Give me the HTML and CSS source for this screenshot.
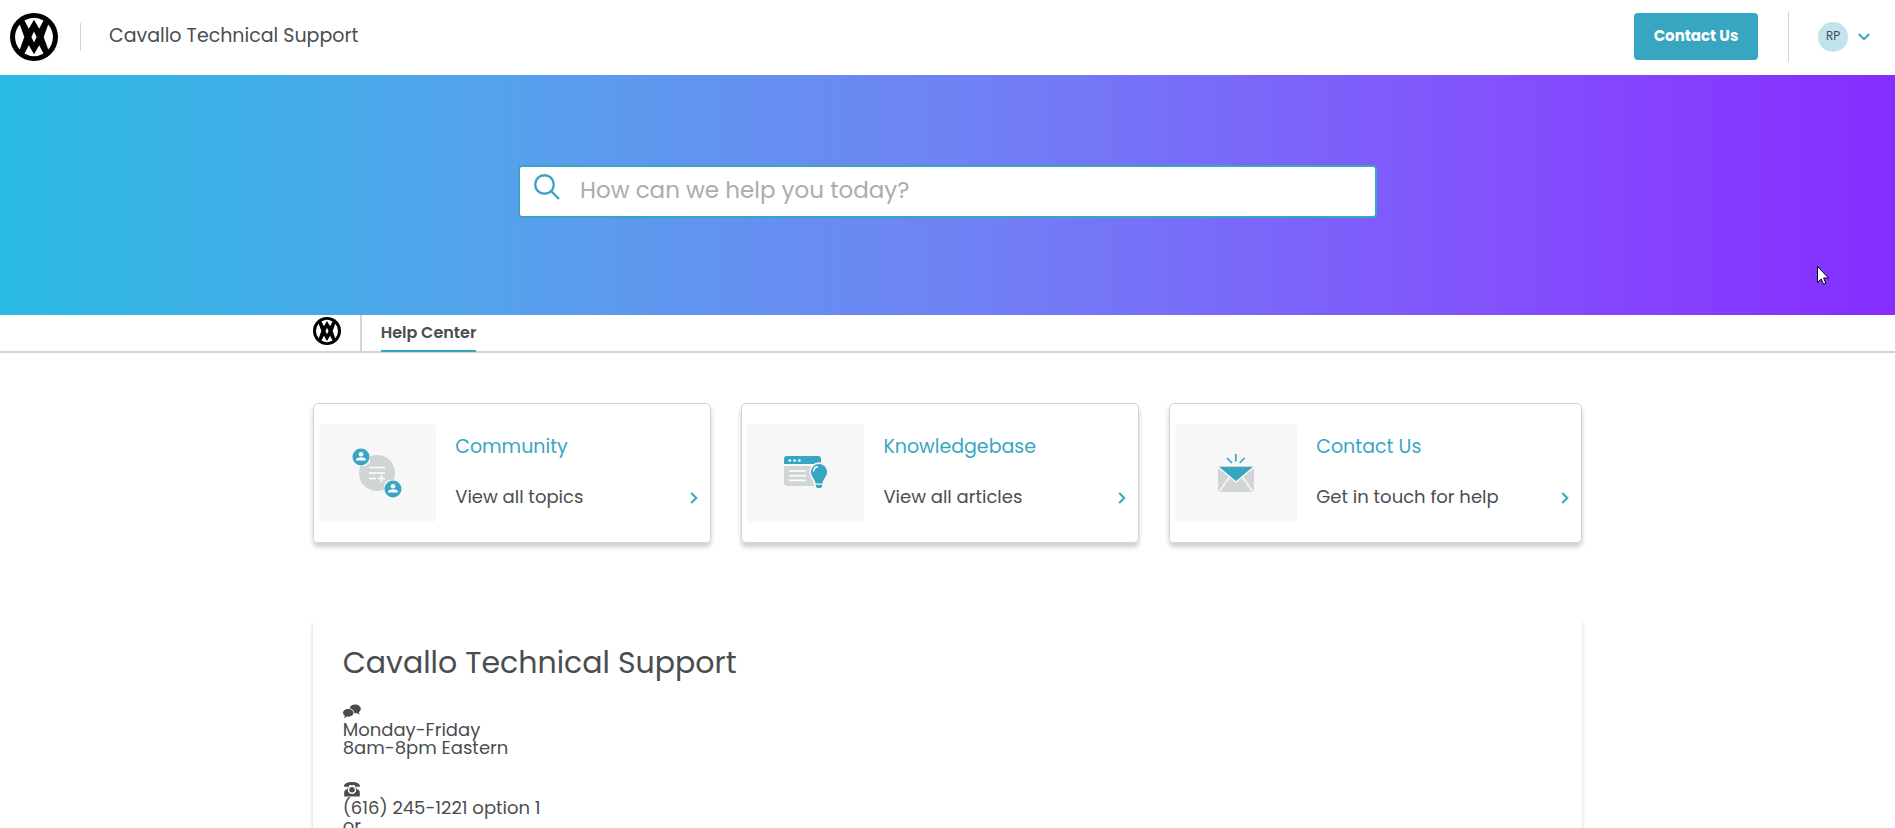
FILE: index.html
```html
<!DOCTYPE html>
<html lang="en">
<head>
<meta charset="utf-8">
<title>Cavallo Technical Support</title>
<link rel="stylesheet" href="styles.css">
</head>
<body>
<svg class="defs" aria-hidden="true">
  <symbol id="logo" viewBox="0 0 48 48">
    <circle cx="24" cy="24" r="24" fill="#000"/>
    <g fill="#fff">
      <path d="M14.500 7.600A18.900 18.900 0 0 1 33.500 7.600L29.200 15.800 24 6.800 18.800 15.800z"/>
      <path d="M14.500 40.400A18.900 18.900 0 0 0 33.500 40.400L29.200 32.200 24 41.200 18.800 32.200z"/>
      <path d="M9.800 11.500A18.900 18.900 0 0 0 9.800 36.500L14.300 24z"/>
      <path d="M38.200 11.500A18.900 18.900 0 0 1 38.200 36.500L33.700 24z"/>
      <path d="M24 18.500 26.600 24 24 29.500 21.400 24z"/>
    </g>
  </symbol>
  <symbol id="chevron" viewBox="0 0 8 12">
    <path d="M1.200 1 6.300 6 1.200 11" fill="none" stroke="#38a6c1" stroke-width="2"/>
  </symbol>
  <symbol id="person" viewBox="0 0 18 18">
    <circle cx="9" cy="9" r="9.200" fill="#38a6c1" stroke="#f7f7f7" stroke-width="1.400"/>
    <circle cx="9" cy="6.200" r="2.300" fill="#fff"/>
    <path d="M4 12.600V12c0-1.800 2.500-2.700 5-2.700s5 .9 5 2.700v.6z" fill="#fff"/>
  </symbol>
</svg>

<header class="topbar">
  <a class="brand" href="#" aria-label="Home"><svg class="brand-logo"><use href="#logo"/></svg></a>
  <a class="site-name" href="#">Cavallo Technical Support</a>
  <button class="contact-button" type="button">Contact Us</button>
  <button class="account" type="button" aria-label="Account menu">
    <span class="avatar">RP</span>
    <svg class="account-arrow" viewBox="0 0 12 8"><path d="M.8 1 6 6.200 11.200 1" fill="none" stroke="#38a6c1" stroke-width="2"/></svg>
  </button>
</header>

<section class="hero">
  <form class="search" role="search">
    <svg class="search-icon" viewBox="0 0 26 26"><g fill="none" stroke="#38a6c1" stroke-width="2.400"><circle cx="10.500" cy="10.500" r="9.300"/><path d="m17 17 8 8"/></g></svg>
    <input class="search-input" type="text" aria-label="Search" placeholder="How can we help you today?">
  </form>
  <svg class="pointer" viewBox="0 0 12 19"><path d="M.5.500v16l3.700-3.500 2.300 5.300 2.400-1-2.300-5.300h5z" fill="#fff" stroke="#000"/></svg>
</section>

<nav class="subnav">
  <div class="container subnav-row">
    <a class="subnav-home" href="#" aria-label="Home"><svg class="subnav-logo"><use href="#logo"/></svg></a>
    <a class="subnav-link" href="#">Help Center</a>
  </div>
</nav>

<main class="container">
  <div class="cards">
    <a class="card" href="#">
      <span class="thumb">
        <svg class="icon-community" viewBox="0 0 50 50">
          <circle cx="25" cy="25" r="18" fill="#d1d5d6"/>
          <path d="M17 19.500h16M17 25h16M17 30.500h7M26 30.500h7M29.500 27v7" stroke="#fff" stroke-width="1.600"/>
          <use href="#person" x="0" y="0" width="18" height="18"/>
          <use href="#person" x="32" y="32" width="18" height="18"/>
        </svg>
      </span>
      <span class="card-text"><span class="card-title">Community</span><span class="card-sub">View all topics</span></span>
      <svg class="card-arrow"><use href="#chevron"/></svg>
    </a>
    <a class="card" href="#">
      <span class="thumb">
        <svg class="icon-kb" viewBox="0 0 44 34">
          <path d="M0 8V3a3 3 0 0 1 3-3h31a3 3 0 0 1 3 3v5z" fill="#38a6c1"/>
          <path d="M0 10h37v20H3a3 3 0 0 1-3-3z" fill="#d1d5d6"/>
          <g fill="#fff"><circle cx="5.800" cy="4.500" r="1.300"/><circle cx="10.600" cy="4.500" r="1.300"/><circle cx="15.400" cy="4.500" r="1.300"/></g>
          <path d="M5 15h17M5 19.700h17M5 24.400h17" stroke="#fff" stroke-width="1.600"/>
          <path d="M35 8a8 8 0 0 1 8 8c0 5.500-4 6-4.500 11.500h-7C31 22 27 21.500 27 16a8 8 0 0 1 8-8z" fill="#38a6c1" stroke="#f7f7f7" stroke-width="3.400" paint-order="stroke"/>
          <path d="M32 28.800h6v1.500l-1 1.700h-4l-1-1.700z" fill="#38a6c1" stroke="#f7f7f7" stroke-width="1" paint-order="stroke"/>
          <path d="M29.500 15.500c.2-2.600 2-4.400 4.500-4.700" fill="none" stroke="#fff" stroke-width="1.400"/>
        </svg>
      </span>
      <span class="card-text"><span class="card-title">Knowledgebase</span><span class="card-sub">View all articles</span></span>
      <svg class="card-arrow"><use href="#chevron"/></svg>
    </a>
    <a class="card" href="#">
      <span class="thumb">
        <svg class="icon-mail" viewBox="0 0 36 38">
          <rect y="12" width="36" height="26" rx="2" fill="#d1d5d6"/>
          <path d="m0 13 18 15 18-15M1 38l10.500-15M35 38 24.500 23" fill="none" stroke="#f7f7f7" stroke-width="1.600"/>
          <path d="M1.500 13h33L18 27z" fill="#38a6c1"/>
          <path d="M17.800 0v7.500M9 4l5 5M26.600 4l-5 5" stroke="#38a6c1" stroke-width="1.700"/>
        </svg>
      </span>
      <span class="card-text"><span class="card-title">Contact Us</span><span class="card-sub">Get in touch for help</span></span>
      <svg class="card-arrow"><use href="#chevron"/></svg>
    </a>
  </div>

  <section class="panel">
    <h1 class="panel-title">Cavallo Technical Support</h1>
    <svg class="panel-icon" viewBox="0 0 18 14"><g fill="#4a4d50"><path d="M12 0c3.300 0 5.800 1.900 5.800 4.300 0 1.500-.8 2.700-2 3.500.2.900.6 1.500 1.300 2.200-1.300 0-2.400-.5-3.200-1.400-.8.200-1.700.2-2.500.1C11.200 6 9.500 4.300 6.700 3.700 7 1.600 9.200 0 12 0z"/><path d="M5.300 4.400c3 0 5.200 1.700 5.200 3.900s-2.200 3.900-5.200 3.900l-1.400-.1c-.8.900-1.900 1.500-3.200 1.500.6-.6 1.100-1.300 1.300-2.200C.8 10.700 0 9.600 0 8.300c0-2.200 2.300-3.900 5.300-3.900z"/></g></svg>
    <p class="panel-copy">Monday-Friday<br>8am-8pm Eastern</p>
    <svg class="panel-icon" viewBox="0 0 18 15"><g fill="#4a4d50"><path d="M1 4.700C1 1.500 4 0 9 0s8 1.500 8 4.700h-5V3.300H6v1.400z"/><path d="M1.200 14.500V10c0-1.500 1.500-2 3.200-3.400L5 5.500h8l.6 1.100C15.300 8 16.800 8.500 16.800 10v4.500z"/></g><circle cx="9" cy="7.700" r="3.500" fill="#4a4d50" stroke="#fff" stroke-width="1.500"/></svg>
    <p class="panel-copy">(616) 245-1221 option 1<br>or</p>
  </section>
</main>
</body>
</html>
```

FILE: styles.css
```css
* { box-sizing: border-box; }
html { overflow: hidden; }
body {
  margin: 0;
  height: 100vh;
  overflow: hidden;
  background: #fff;
  color: #4a4d50;
  font-family: Poppins, Inter, sans-serif;
  font-size: 18px;
}
a { color: inherit; text-decoration: none; }
svg { display: block; flex: none; }
button { border: 0; padding: 0; background: none; color: inherit; font: inherit; }
.defs { position: absolute; width: 0; height: 0; }
.container { width: 67%; max-width: 1270px; margin: 0 auto; }

.topbar { display: flex; align-items: center; height: 75px; padding: 0 25px 2px 10px; }
.brand { padding-right: 22px; }
.brand-logo { width: 48px; height: 48px; }
.site-name {
  height: 28px;
  padding-left: 28px;
  border-left: 1px solid #d1d5d6;
  font-size: 19px;
  line-height: 26px;
}
.contact-button {
  width: 124px;
  height: 47px;
  margin-left: auto;
  padding-bottom: 2px;
  border-radius: 4px;
  background: #38a6c1;
  color: #fff;
  font-size: 15px;
  font-weight: 700;
}
.account {
  display: flex;
  align-items: center;
  gap: 10px;
  height: 50px;
  margin-left: 30px;
  padding-left: 29px;
  border-left: 1px solid #d1d5d6;
}
.avatar {
  width: 30px;
  height: 30px;
  border-radius: 50%;
  background: #c0e3ec;
  font-size: 12px;
  line-height: 28px;
}
.account-arrow { width: 12px; height: 8px; }

.hero {
  position: relative;
  display: flex;
  justify-content: center;
  height: 240px;
  padding-top: 90px;
  background: linear-gradient(90deg, #2bbbe2 0%, #55a2ec 26%, #6f83f4 50%, #8253fc 78%, #8638ff 93%, #842dff 100%);
}
.search {
  display: flex;
  gap: 20px;
  width: 859px;
  height: 53px;
  padding: 7px 14px;
  border: 2px solid #38a6c1;
  border-radius: 4px;
  background: #fff;
}
.search-icon { width: 26px; height: 26px; }
.search-input {
  flex: 1;
  min-width: 0;
  height: 32px;
  border: 0;
  padding: 0;
  outline: 0;
  background: none;
  font-family: inherit;
  font-size: 23px;
}
.search-input::placeholder { color: #a9adad; opacity: 1; }
.pointer { position: absolute; top: 191px; right: 66px; width: 12px; height: 19px; }

.subnav { border-bottom: 2px solid #d1d5d6; }
.subnav-row { display: flex; height: 36px; }
.subnav-home { padding: 2px 19px 0 0; border-right: 2px solid #d1d5d6; }
.subnav-logo { width: 28px; height: 28px; }
.subnav-link {
  height: 37px;
  margin-left: 19px;
  border-bottom: 2px solid #38a6c1;
  font-size: 16px;
  font-weight: 600;
  line-height: 36px;
}

.cards {
  display: grid;
  grid-template-columns: 398fr 398fr 413fr;
  gap: 30px;
  padding-top: 50px;
}
.card {
  display: flex;
  padding: 20px 12px 20px 5px;
  border: 1px solid #d1d5d6;
  border-radius: 5px;
  box-shadow: 0 4px 5px rgba(0, 0, 0, 0.2);
}
.thumb {
  display: grid;
  place-items: center;
  width: 31%;
  height: 98px;
  border-radius: 4px;
  background: #f7f7f7;
}
.card-text { display: flex; flex: 1; flex-direction: column; gap: 20px; padding: 8px 0 0 19px; }
.card-title { color: #38a6c1; font-size: 19px; line-height: 30px; }
.card-sub { line-height: 30px; }
.card-arrow { align-self: flex-end; width: 8px; height: 12px; margin-bottom: 18px; }
.icon-community { width: 50px; height: 50px; }
.icon-kb { width: 44px; height: 34px; }
.icon-mail { width: 36px; height: 38px; }

.panel {
  min-height: 260px;
  margin-top: 76px;
  padding: 24px 30px;
  box-shadow: 0 4px 4px rgba(0, 0, 0, 0.2);
}
.panel-title { margin: 0 0 21px; font-size: 30px; font-weight: 400; line-height: 40px; }
.panel-icon { width: 18px; height: 15px; }
.panel-copy { margin: 2px 0 25px; line-height: 18px; }
```
